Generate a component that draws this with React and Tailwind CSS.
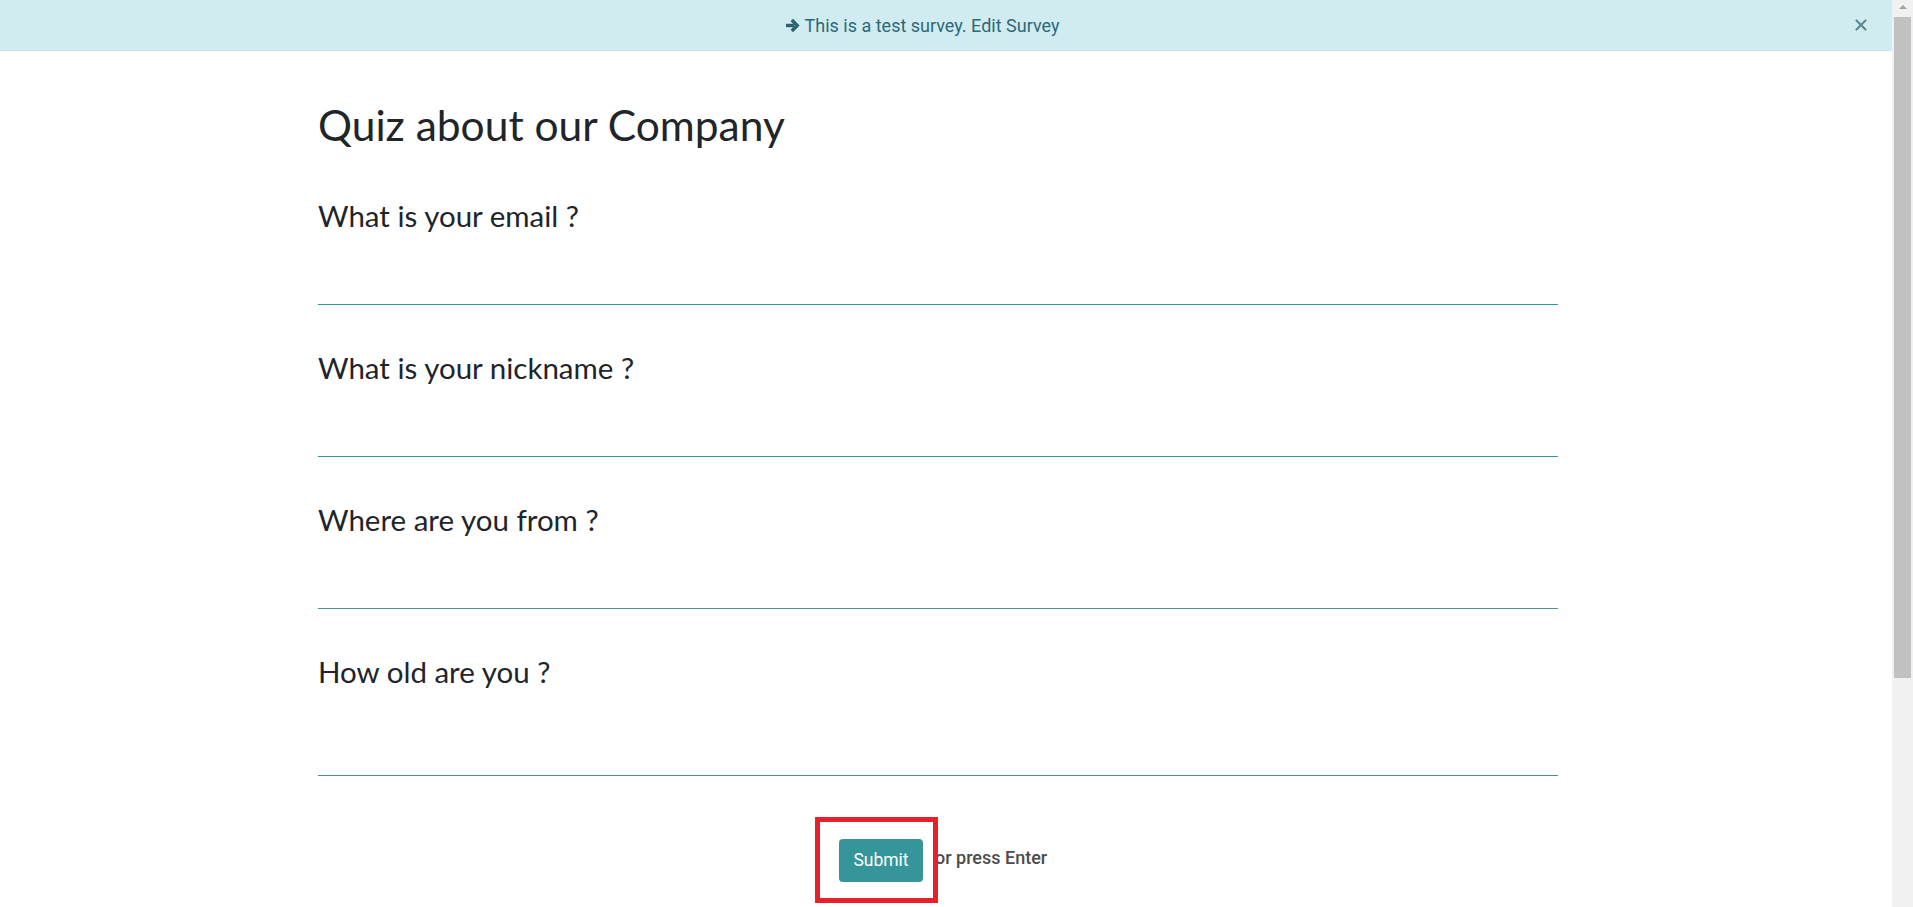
import React from 'react'

const questions = [
  { label: 'What is your email ?', type: 'email', h: 'h-[74px]', line: 'border-[#2a9a9c]' },
  { label: 'What is your nickname ?', type: 'text', h: 'h-[74px]', line: 'border-[#2a9a9c]' },
  { label: 'Where are you from ?', type: 'text', h: 'h-[74px]', line: 'border-[#4a9598]' },
  { label: 'How old are you ?', type: 'number', h: 'h-[89px]', line: 'border-[#4d8f90]' },
]

const Question = ({ q }) => {
  return (
    <div className="mb-[48px] last:mb-0">
      <h3 className="text-[29.5px] leading-[30px] text-[#212529] font-['Lato',sans-serif]">{q.label}</h3>
      <input
        type={q.type}
        className={`block w-full bg-transparent outline-none border-0 border-b ${q.line} ${q.h}`}
      />
    </div>
  )
}

export default function App() {
  return (
    <div className="flex h-[907px] w-full overflow-hidden bg-white font-['Roboto',sans-serif]">
      <div className="flex-1 flex flex-col">
        {/* test survey banner */}
        <div className="relative flex h-[51px] items-center justify-center pr-[48px] bg-[#d1ecf1] border-b border-[#c5e5eb] text-[18px] text-[#2d6878]">
          <svg width="15" height="15" viewBox="0 0 15 15" className="mr-[5px] text-[#2b6272]">
            <path d="M1 5.8 H9 V9.2 H1 Z" fill="currentColor" />
            <path d="M6.8 2 L12.2 7.5 L6.8 13" fill="none" stroke="currentColor" strokeWidth="3.4" strokeLinejoin="miter" />
          </svg>
          <span>This is a test survey. Edit Survey</span>
          <button className="absolute right-[25px] top-[19px] text-[#5d8a96]">
            <svg width="12" height="12" viewBox="0 0 12 12">
              <path d="M1.5 1.5 L10.5 10.5 M10.5 1.5 L1.5 10.5" stroke="currentColor" strokeWidth="2.2" strokeLinecap="round" />
            </svg>
          </button>
        </div>

        <div className="pl-[318px] w-[1558px]">
          <h1 className="mt-[53px] text-[42.5px] leading-none text-[#212529] font-['Lato',sans-serif]">Quiz about our Company</h1>

          <div className="mt-[54px]">
            {questions.map((q) => (
              <Question key={q.label} q={q} />
            ))}
          </div>

          <div className="mt-[63px] flex items-start pl-[521px]">
            <div className="relative">
              <button className="h-[43px] w-[84px] rounded-[4px] bg-[#35959a] text-[17.5px] text-white">Submit</button>
              <div className="absolute left-[-24px] top-[-22px] h-[86px] w-[123px] border-[5px] border-[#e8202a]" />
            </div>
            <span className="ml-[12px] mt-[7px] text-[18px] leading-[24px] font-medium text-[#4c4c4c]">or press Enter</span>
          </div>
        </div>
      </div>

      {/* scrollbar */}
      <div className="flex w-[21px] flex-col items-center bg-[#f1f1f1]">
        <div className="mt-[5px] h-0 w-0 border-x-[4px] border-b-[4px] border-x-transparent border-b-[#a3a3a3]" />
        <div className="mt-[8px] h-[661px] w-[17px] bg-[#c1c1c1]" />
      </div>
    </div>
  )
}
